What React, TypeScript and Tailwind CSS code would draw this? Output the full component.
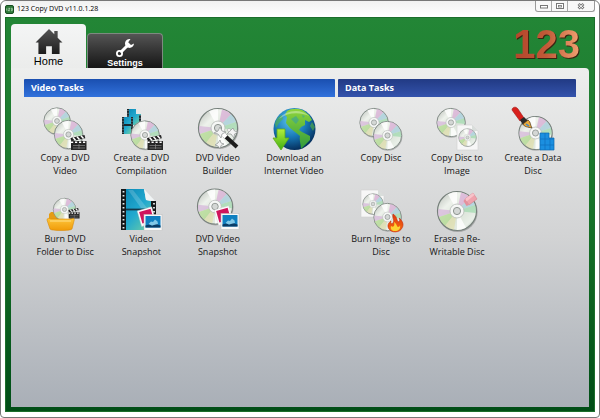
import { useState } from "react";
import type { ReactNode } from "react";

type Spot = { x: number; y: number; r: number };

function Defs() {
  return (
    <svg width="0" height="0" className="absolute" aria-hidden="true">
      <defs>
        <linearGradient id="disc" x1="0" y1="0" x2="1" y2="1">
          <stop offset="0" stopColor="#b3b8b2" />
          <stop offset="0.3" stopColor="#eef2ec" />
          <stop offset="0.55" stopColor="#d9e2d6" />
          <stop offset="0.8" stopColor="#e9efe8" />
          <stop offset="1" stopColor="#9caea2" />
        </linearGradient>
        <linearGradient id="film" x1="0" y1="0" x2="1" y2="1">
          <stop offset="0" stopColor="#0a86b4" />
          <stop offset="0.5" stopColor="#22a9cf" />
          <stop offset="1" stopColor="#7fd69a" />
        </linearGradient>
        <radialGradient id="globe" cx="0.4" cy="0.3" r="0.7">
          <stop offset="0" stopColor="#5cc4ea" />
          <stop offset="0.55" stopColor="#1879b8" />
          <stop offset="1" stopColor="#06315f" />
        </radialGradient>
        <linearGradient id="land" x1="0" y1="0" x2="0" y2="1">
          <stop offset="0" stopColor="#8fd53c" />
          <stop offset="1" stopColor="#2f9a3c" />
        </linearGradient>
        <linearGradient id="arrow" x1="0" y1="0" x2="0" y2="1">
          <stop offset="0" stopColor="#b4ef3c" />
          <stop offset="1" stopColor="#3fae10" />
        </linearGradient>
        <linearGradient id="folder" x1="0" y1="0" x2="0" y2="1">
          <stop offset="0" stopColor="#fdc63c" />
          <stop offset="1" stopColor="#f09a08" />
        </linearGradient>
        <linearGradient id="fire" x1="0" y1="0" x2="0" y2="1">
          <stop offset="0" stopColor="#e03a10" />
          <stop offset="1" stopColor="#f46a12" />
        </linearGradient>
        <linearGradient id="house" x1="0" y1="0" x2="0" y2="1">
          <stop offset="0" stopColor="#555" />
          <stop offset="1" stopColor="#1c1c1c" />
        </linearGradient>
      </defs>
    </svg>
  );
}

function Disc({ x, y, r }: Spot) {
  return (
    <g transform={`translate(${x} ${y}) scale(${r / 20})`}>
      <circle r="20" cx="0.6" cy="1" fill="#000" opacity="0.22" />
      <circle r="19.5" fill="url(#disc)" stroke="#76807b" strokeWidth="1.200" />
      <path d="M0 0 4 -18.500A19 19 0 0 1 13 -13.800Z" fill="#d9a9d6" opacity="0.7" />
      <path d="M0 0 13 -13.800A19 19 0 0 1 18 -6Z" fill="#a5cfe0" opacity="0.7" />
      <path d="M0 0 18 -6A19 19 0 0 1 18.900 2Z" fill="#9ed8ac" opacity="0.7" />
      <path d="M0 0 -18.900 -2A19 19 0 0 0 -18 6Z" fill="#d4b4d8" opacity="0.7" />
      <path d="M0 0 -18 6A19 19 0 0 0 -12 14.700Z" fill="#aad884" opacity="0.65" />
      <path d="M0 0 -12 14.700A19 19 0 0 0 -3 18.700Z" fill="#e2dc98" opacity="0.5" />
      <path d="M0 0 -9 -16.700A19 19 0 0 1 0 -19Z" fill="#fff" opacity="0.8" />
      <path d="M0 0 9 16.700A19 19 0 0 1 0 19Z" fill="#fff" opacity="0.8" />
      <circle r="7" fill="#f6f7f6" stroke="#b5bab6" strokeWidth="0.8" />
      <circle r="3.600" fill="#d4d7d5" stroke="#8d9490" strokeWidth="1" />
    </g>
  );
}

function Clapper({ x, y, s = 1 }: { x: number; y: number; s?: number }) {
  return (
    <g transform={`translate(${x} ${y}) scale(${s})`}>
      <path d="M0.500 3 14.500 0 15.300 3.200 1.300 6.200Z" fill="#222" />
      <path d="M3 2.500 5.500 5.200M7 1.700 9.500 4.400M11 0.800 13.500 3.500" stroke="#fff" strokeWidth="1.500" />
      <rect x="1" y="6" width="15.500" height="9" fill="#262626" />
      <path d="M1 7.300H16.500" stroke="#fff" strokeWidth="1.500" strokeDasharray="2.200 1.800" />
      <path d="M3 10.500H15M3 13H15M9 9V14" stroke="#8b8b8b" strokeWidth="0.700" />
    </g>
  );
}

function Photos({ x, y }: { x: number; y: number }) {
  return (
    <g transform={`translate(${x} ${y})`}>
      <g transform="rotate(-16 8 8)">
        <rect x="0" y="0.500" width="15" height="16" fill="#fff" stroke="#ccc" strokeWidth="0.400" />
        <rect x="1.500" y="2" width="12" height="12" fill="#d0145c" />
      </g>
      <rect x="5" y="6.500" width="18" height="16" fill="#f8f8f8" stroke="#bbb" strokeWidth="0.500" />
      <rect x="6.500" y="8" width="15" height="11.500" fill="#0f7fc0" />
      <path d="M6.500 19.500V17.500L10 16.500 13 17.500 17 16 21.500 17.500V19.500Z" fill="#0a3c66" />
      <path d="M9.500 16 12 13.500 14 14 16 11.500 18.500 13.500 19 16 13 17.500Z" fill="#a9e0f4" opacity="0.75" />
    </g>
  );
}

function Sheet({ x, y, w, h }: { x: number; y: number; w: number; h: number }) {
  return (
    <g transform={`translate(${x} ${y})`}>
      <path d={`M0 0H${w - 6}L${w} 6V${h}H0Z`} fill="#f7f7f7" stroke="#d2d2d2" strokeWidth="0.600" />
      <path d={`M${w - 6} 0V6H${w}Z`} fill="#d9dedb" />
    </g>
  );
}

const art: Record<string, ReactNode> = {
  copyVideo: (
    <>
      <Disc x={14} y={14} r={13.5} />
      <Disc x={25.5} y={27.500} r={14.5} />
      <Clapper x={27} y={28} />
    </>
  ),
  compilation: (
    <>
      <path d="M8 2H17V7H22V18H8Z" fill="url(#film)" />
      <path d="M9 2V18M21 8V18" stroke="#1c2a30" strokeWidth="2" />
      <path d="M9 3V18M21 8V18" stroke="#dfe9ec" strokeWidth="0.600" strokeDasharray="1 1.800" />
      <path d="M3 10H14V27H3Z" fill="url(#film)" />
      <path d="M4 10V27M13 10V27M4 18H13" stroke="#1c2a30" strokeWidth="2" />
      <path d="M4 11V27M13 11V27" stroke="#dfe9ec" strokeWidth="0.600" strokeDasharray="1 1.800" />
      <Disc x={26} y={28} r={14.5} />
      <Clapper x={27.500} y={28} />
    </>
  ),
  builder: (
    <>
      <Disc x={22} y={21} r={20} />
      <path d="M28 28 41 40" stroke="#1d1d1d" strokeWidth="4" />
      <path d="M25 25 30 30" stroke="#fff" strokeWidth="4" />
      <path d="M24 20 26 24 30 25 26 27 25 31 22 27 18 26 22 24ZM37 21 38.500 24 42 25 38.500 27 38 31 35 27 31 27 34 24ZM24 33 25 36 28 37 25 38.500 24 42 22 39 19 38 22 36Z" fill="#f4f4f4" stroke="#8d9290" strokeWidth="0.700" />
      <circle cx="33" cy="23" r="1.500" fill="#fff" stroke="#999" strokeWidth="0.500" />
    </>
  ),
  download: (
    <>
      <circle cx="22.500" cy="22" r="21" fill="url(#globe)" />
      <path d="M15 4C20 1 27 1 32 4L37 8 40 13 37 15 33 13 33 18 29 20 27 23 30 25 34 27 38 29 38 33 33 38 29 42C29 37 27 33 28 29L23 25 18 21 14 16 15 10 13 8Z" fill="url(#land)" />
      <path d="M3 17C4 12 7 9 10 8L11 12 7 16 4 21ZM40 15 43 20 41 24 38 19Z" fill="#56b543" opacity="0.6" />
      <path d="M19 12 24 9 27 13 24 17ZM30 8 33 9 31 11Z" fill="#2a9cb0" opacity="0.5" />
      <path d="M7 12C13 3 29 1 37 9 28 5 16 5 7 12Z" fill="#fff" opacity="0.350" />
      <path d="M5 22H13V31H17L9 43 1 31H5Z" fill="url(#arrow)" stroke="#5da91d" strokeWidth="0.800" />
    </>
  ),
  copyDisc: (
    <>
      <Disc x={15} y={15.5} r={14.5} />
      <Disc x={28.500} y={28.5} r={14.5} />
    </>
  ),
  discImage: (
    <>
      <Disc x={16} y={15.5} r={14.5} />
      <Sheet x={22} y={18} w={21} h={25} />
      <Disc x={32.500} y={30.5} r={9} />
    </>
  ),
  dataDisc: (
    <>
      <Disc x={24.500} y={26} r={17} />
      <path d="M1 3C1 0 5 -1 7 2L13 11 9 14Z" fill="#d8201c" stroke="#9e1612" strokeWidth="0.600" />
      <path d="M9 13 13 10 17 14 12 18Z" fill="#2b2b2b" />
      <path d="M12 17 17 13C20 15 19 18 21 21 17 20 13 20 12 17Z" fill="#e9a93b" stroke="#4c3517" strokeWidth="0.700" />
      <path d="M15 17 18 19" stroke="#3c8bd1" strokeWidth="1.500" />
      <path d="M29 26H38V31H43V43H29Z" fill="#1b8fe0" stroke="#0d67b0" strokeWidth="0.700" />
      <path d="M29 32H43M29 38H43M34 26V43M39 31V43" stroke="#0f6dbb" strokeWidth="0.700" />
    </>
  ),
  burnFolder: (
    <>
      <path d="M6 26 8 24H15L18 27H30L31 33H6Z" fill="#e59c14" />
      <Disc x={21.500} y={21.5} r={11.5} />
      <Clapper x={25} y={20} s={0.7} />
      <path d="M4 32C4 30 6 30 8 31H28C30 30 32 30 31 33L29 41C28 43 8 43 7 41Z" fill="url(#folder)" stroke="#d98a08" strokeWidth="0.600" />
      <path d="M7 33H28" stroke="#ffe08a" strokeWidth="1" />
    </>
  ),
  videoSnap: (
    <>
      <path d="M2 1H25L27 12 37 14V42H2Z" fill="url(#film)" />
      <path d="M25 1 27 12 37 14Z" fill="#f0f4f5" />
      <path d="M4.500 1V42M34.500 13V42" stroke="#16191b" strokeWidth="5" />
      <path d="M4.500 3V42M35 15V42" stroke="#e8eef0" strokeWidth="1.800" strokeDasharray="1.600 2.400" />
      <path d="M7 21.500H32" stroke="#16384a" strokeWidth="1.800" />
      <path d="M9 2H14L28 20H22Z" fill="#fff" opacity="0.180" />
      <Photos x={20} y={20} />
    </>
  ),
  discSnap: (
    <>
      <Disc x={19} y={18.5} r={18} />
      <Photos x={20} y={19} />
    </>
  ),
  burnImage: (
    <>
      <Sheet x={2} y={2} w={23} h={27} />
      <Disc x={14} y={16} r={10.5} />
      <Disc x={28.500} y={29} r={14} />
      <path d="M34 26C39 29 37 33 40 34 41 33 41 31 40 30 44 33 45 37 43 40 41 45 32 45 30 41 28 38 29 35 32 33 31 36 33 36 34 35 36 32 33 30 34 26Z" fill="url(#fire)" stroke="#c22c0c" strokeWidth="0.600" />
      <path d="M35 34C39 37 37 38 39 39 40 39 41 38 41 37 42 41 39 43 36 43 33 43 31 41 32 38 35 40 36 37 35 34Z" fill="#fed233" />
    </>
  ),
  erase: (
    <>
      <Disc x={22} y={23} r={20} />
      <path d="M30 11 38 5 42 11 34 17Z" fill="#f0a3ad" stroke="#d4848f" strokeWidth="0.600" />
      <path d="M30 11 38 5 39.500 7 31.500 13.500Z" fill="#f8c3ca" />
      <path d="M30 11 34 17 31.500 18 28.500 13Z" fill="#e58f9b" />
    </>
  ),
};

type Task = { icon: string; lines: string[] };

const videoTasks: Task[] = [
  { icon: "copyVideo", lines: ["Copy a DVD", "Video"] },
  { icon: "compilation", lines: ["Create a DVD", "Compilation"] },
  { icon: "builder", lines: ["DVD Video", "Builder"] },
  { icon: "download", lines: ["Download an", "Internet Video"] },
  { icon: "burnFolder", lines: ["Burn DVD", "Folder to Disc"] },
  { icon: "videoSnap", lines: ["Video", "Snapshot"] },
  { icon: "discSnap", lines: ["DVD Video", "Snapshot"] },
];

const dataTasks: Task[] = [
  { icon: "copyDisc", lines: ["Copy Disc"] },
  { icon: "discImage", lines: ["Copy Disc to", "Image"] },
  { icon: "dataDisc", lines: ["Create a Data", "Disc"] },
  { icon: "burnImage", lines: ["Burn Image to", "Disc"] },
  { icon: "erase", lines: ["Erase a Re-", "Writable Disc"] },
];

function TaskButton({ icon, lines }: Task) {
  return (
    <button type="button" className="flex flex-col items-center justify-start whitespace-nowrap text-[9px] leading-[13px] text-[#151515]">
      <svg viewBox="0 0 44 44" className="size-11 shrink-0 overflow-visible" aria-hidden="true">
        {art[icon]}
      </svg>
      {lines.map((line) => (
        <span key={line}>{line}</span>
      ))}
    </button>
  );
}

export default function App() {
  const [tab, setTab] = useState("home");
  return (
    <div className="flex min-h-screen flex-col rounded-t-md rounded-b-sm border border-[#777] bg-white px-1 pb-[5px] font-['Open_Sans','Noto_Sans',sans-serif]">
      <Defs />
      <header className="flex h-4 shrink-0 items-start justify-between bg-gradient-to-b from-[#f1f1f1] to-white">
        <div className="flex h-4 items-center gap-[3px]">
          <span className="flex h-[9px] w-[9px] items-center justify-center rounded-xs border border-[#174d20] bg-[#2f7a3a]">
            <svg viewBox="0 0 9 5" className="h-[5px] w-[7px]" aria-hidden="true">
              <path d="M1 1V4M3 1H5L3 4H5M6.500 1H8V4H6.500M7 2.500H8" fill="none" stroke="#dff0df" strokeWidth="0.800" />
            </svg>
          </span>
          <h1 className="text-[7px] leading-3 text-black">123 Copy DVD v11.0.1.28</h1>
        </div>
        <div className="flex h-[11px] w-[60px] overflow-hidden rounded-b-[3px] border border-t-0 border-[#9a9a9a] bg-[#f8f8f8]">
          <button type="button" aria-label="Minimize" className="flex w-4 items-center justify-center border-r border-[#aaa]">
            <svg viewBox="0 0 8 8" className="size-2" aria-hidden="true"><rect x="0.500" y="3.500" width="7" height="2.500" fill="#fff" stroke="#777" /></svg>
          </button>
          <button type="button" aria-label="Maximize" className="flex w-4 items-center justify-center border-r border-[#aaa]">
            <svg viewBox="0 0 8 8" className="size-2" aria-hidden="true"><rect x="0.500" y="1.500" width="7" height="5" fill="#fff" stroke="#777" /><rect x="2.500" y="3.500" width="3" height="1.500" fill="none" stroke="#777" strokeWidth="0.800" /></svg>
          </button>
          <button type="button" aria-label="Close" className="flex flex-1 items-center justify-center">
            <svg viewBox="0 0 8 8" className="size-2" aria-hidden="true"><path d="M1.500 2 6.500 6.500M6.500 2 1.500 6.500" stroke="#777" strokeWidth="2.800" /><path d="M1.800 2.300 6.200 6.200M6.200 2.300 1.800 6.200" stroke="#fff" strokeWidth="1" /></svg>
          </button>
        </div>
      </header>

      <main className="flex flex-1 flex-col border border-[#1b6e2b] bg-gradient-to-b from-[#238636] via-[#177329] to-[#004d16] px-[5px] pb-1">
        <div className="flex h-[50px] shrink-0 items-end justify-between">
          <div role="tablist" className="flex items-end gap-px font-['Liberation_Sans',sans-serif]">
            <button type="button" role="tab" aria-selected={tab === "home"} onClick={() => setTab("home")} className="flex h-11 w-[75px] flex-col items-center rounded-t-[4px] bg-gradient-to-b from-[#f4f5f5] to-[#ebeceb] pt-[5px] text-[11px] leading-[14px] text-black">
              <svg viewBox="0 0 28 26" className="h-[26px] w-7" aria-hidden="true">
                <path d="M14 0 19.500 5.500V2H23V9L28 14H25V26H17V18H11V26H3V14H0Z" fill="url(#house)" />
              </svg>
              <span>Home</span>
            </button>
            <button type="button" role="tab" aria-selected={tab === "settings"} onClick={() => setTab("settings")} className="flex h-[35px] w-[76px] flex-col items-center rounded-t-[4px] border border-b-0 border-[#7d8a80] bg-gradient-to-b from-[#555] to-[#161616] pt-1 text-[9px] leading-[10px] font-bold text-white">
              <svg viewBox="0 0 20 20" className="size-5" aria-hidden="true">
                <path d="M5.500 14.500 13.500 6.500" stroke="#fff" strokeWidth="3" />
                <circle cx="4.500" cy="15.500" r="2.600" fill="none" stroke="#fff" strokeWidth="1.800" />
                <path d="M15.500 1A4.500 4.500 0 1 0 19 5.500L16 7 13.200 4.300Z" fill="#fff" />
              </svg>
              <span>Settings</span>
            </button>
          </div>
          <span className="mr-[9px] self-start bg-gradient-to-r from-[#b4442a] via-[#c25a38] to-[#f0a070] bg-clip-text pt-1 font-['Liberation_Sans',sans-serif] text-[40px] leading-[44px] font-bold text-transparent drop-shadow-[1px_1px_0px_#3a2412]">
            123
          </span>
        </div>

        <div className="flex-1 rounded-tr-[4px] bg-gradient-to-b from-[#edeeed] via-[#d2d3d4] to-[#a9afb7] px-[13px] pt-[11px] pb-4">
          <div className="grid grid-cols-[311fr_238fr] gap-[3px]">
            <section>
              <h2 className="h-[18px] rounded-t-[1px] bg-gradient-to-b from-[#1a4fb0] to-[#3272dc] pl-[7px] text-[9px] leading-[18px] font-bold text-white">Video Tasks</h2>
              <div className="mt-[10px] grid grid-cols-4 gap-y-[11px] px-[3px]">
                {videoTasks.map((t) => <TaskButton key={t.icon} {...t} />)}
              </div>
            </section>
            <section>
              <h2 className="h-[18px] rounded-t-[1px] bg-gradient-to-b from-[#213a84] to-[#3453ac] pl-[7px] text-[9px] leading-[18px] font-bold text-white">Data Tasks</h2>
              <div className="mt-[10px] grid grid-cols-3 gap-y-[11px] px-[5px]">
                {dataTasks.map((t) => <TaskButton key={t.icon} {...t} />)}
              </div>
            </section>
          </div>
        </div>
      </main>
    </div>
  );
}
